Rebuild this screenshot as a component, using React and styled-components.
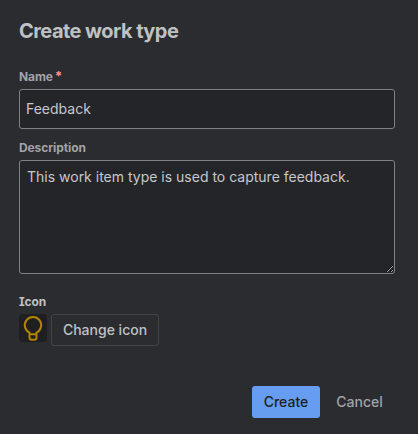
import styled, { createGlobalStyle } from "styled-components";

const GlobalStyle = createGlobalStyle`
    * {
        box-sizing: border-box;
    }
    body {
        margin: 0;
        background-color: #2b2c2f;
        color-scheme: dark;
        font-family: "Inter", sans-serif;
    }
`

const Modal = styled.form`
    display: flex;
    flex-direction: column;
    width: 100%;
    height: 434px;
    padding: 19px 23px 16px 19px;
    background-color: #2b2c2f;
`

const Title = styled.h1`
    margin: 0 0 27px;
    font-size: 20px;
    line-height: 24px;
    font-weight: 700;
    letter-spacing: -0.55px;
    color: #bfc1c4;
`

const Field = styled.div`
    display: flex;
    flex-direction: column;
    margin-bottom: ${props => props.$gap || '0'};
`

const Label = styled.label`
    height: 19px;
    font-size: 12px;
    line-height: 14px;
    font-weight: 700;
    letter-spacing: -0.1px;
    color: ${props => props.$bright ? '#bfc1c4' : '#a2a3a7'};
    font-feature-settings: "cv08";
`

const Required = styled.span`
    margin-left: 2px;
    font-size: 13px;
    line-height: 10px;
    font-weight: 800;
    color: #fd8b83;
`

const TextField = styled.input`
    height: 40px;
    padding: 0 6px 1px;
    border: 1px solid #7e8188;
    border-radius: 3px;
    outline: none;
    background-color: #242528;
    color: #c6c8cb;
    font: 400 14px/20px "Inter", sans-serif;
`

const TextArea = styled.textarea`
    height: 114px;
    padding: 6px 7px;
    border: 1px solid #7e8188;
    border-radius: 3px;
    outline: none;
    background-color: #242528;
    color: #c6c8cb;
    font: 400 14px/20px "Inter", sans-serif;
    resize: vertical;
`

const IconRow = styled.div`
    display: flex;
    align-items: flex-start;
    gap: 4px;
`

const IconTile = styled.div`
    display: flex;
    align-items: center;
    justify-content: center;
    width: 28px;
    height: 28px;
    border-radius: 4px;
    background-color: #1f1f21;
`

const Button = styled.button`
    height: 32px;
    width: ${props => props.$width};
    padding: 0;
    border: 1px solid ${props => props.$outlined ? '#424348' : 'transparent'};
    border-radius: 3px;
    background-color: ${props => props.$primary ? '#669df1' : 'transparent'};
    color: ${props => props.$primary ? '#1f1f21' : props.$outlined ? '#bfc1c4' : '#a2a3a7'};
    font: 500 14px/20px "Inter", sans-serif;
`

const Footer = styled.div`
    display: flex;
    justify-content: flex-end;
    gap: 4px;
    margin-top: auto;
`

const BulbIcon = () => (
    <svg width="28" height="28" viewBox="0 0 28 28" fill="none" stroke="#b38600" strokeWidth="2" strokeLinejoin="round">
        <path d="M10.5 20V18.6A8.2 8.2 0 1 1 17.5 18.6V20" />
        <path d="M10.5 20.3H17.5V23.5Q17.5 25.7 15.3 25.7H12.7Q10.5 25.7 10.5 23.5Z" />
    </svg>
)

export default function App() {
    return (
        <>
            <GlobalStyle />
            <Modal onSubmit={e => e.preventDefault()}>
                <Title>Create work type</Title>
                <Field $gap="12px">
                    <Label htmlFor="name">Name<Required>*</Required></Label>
                    <TextField id="name" defaultValue="Feedback" />
                </Field>
                <Field $gap="21px">
                    <Label htmlFor="description">Description</Label>
                    <TextArea id="description" spellCheck={false} defaultValue="This work item type is used to capture feedback." />
                </Field>
                <Field>
                    <Label as="span" $bright>Icon</Label>
                    <IconRow>
                        <IconTile><BulbIcon /></IconTile>
                        <Button type="button" $outlined $width="108px">Change icon</Button>
                    </IconRow>
                </Field>
                <Footer>
                    <Button type="submit" $primary $width="68px">Create</Button>
                    <Button type="button" $width="71px">Cancel</Button>
                </Footer>
            </Modal>
        </>
    )
}
